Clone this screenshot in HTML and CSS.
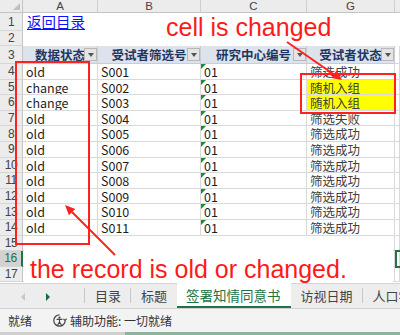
FILE: index.html
```html
<!DOCTYPE html>
<html>
<head>
<meta charset="utf-8">
<link rel="stylesheet" href="styles.css">
</head>
<body>
<div class="sheet">
  <div class="grid">
    <div class="corner"><span class="corner-tri"></span></div>
    <div class="colh">A</div>
    <div class="colh">B</div>
    <div class="colh">C</div>
    <div class="colh">G</div>
    <div class="colh colh-last"></div>

    <div class="rowh">1</div>
    <div class="blank"><a class="link">返回目录</a></div>
    <div class="blank"></div><div class="blank"></div><div class="blank"></div><div class="blank"></div>

    <div class="rowh">2</div>
    <div class="blank"></div><div class="blank"></div><div class="blank"></div><div class="blank"></div><div class="blank"></div>

    <div class="rowh">3</div>
    <div class="hcell"><span class="htext">数据状态</span><span class="dd"></span></div>
    <div class="hcell"><span class="htext">受试者筛选号</span><span class="dd"></span></div>
    <div class="hcell"><span class="htext">研究中心编号</span><span class="dd"></span></div>
    <div class="hcell"><span class="htext">受试者状态</span><span class="dd"></span></div>
    <div class="cell"></div>

    <div class="rowh">4</div><div class="cell">old</div><div class="cell">S001</div><div class="cell txt">01</div><div class="cell cn">筛选成功</div><div class="cell"></div>
    <div class="rowh">5</div><div class="cell">change</div><div class="cell">S002</div><div class="cell txt">01</div><div class="cell cn hl">随机入组</div><div class="cell"></div>
    <div class="rowh">6</div><div class="cell">change</div><div class="cell">S003</div><div class="cell txt">01</div><div class="cell cn hl">随机入组</div><div class="cell"></div>
    <div class="rowh">7</div><div class="cell">old</div><div class="cell">S004</div><div class="cell txt">01</div><div class="cell cn">筛选失败</div><div class="cell"></div>
    <div class="rowh">8</div><div class="cell">old</div><div class="cell">S005</div><div class="cell txt">01</div><div class="cell cn">筛选成功</div><div class="cell"></div>
    <div class="rowh">9</div><div class="cell">old</div><div class="cell">S006</div><div class="cell txt">01</div><div class="cell cn">筛选成功</div><div class="cell"></div>
    <div class="rowh">10</div><div class="cell">old</div><div class="cell">S007</div><div class="cell txt">01</div><div class="cell cn">筛选成功</div><div class="cell"></div>
    <div class="rowh">11</div><div class="cell">old</div><div class="cell">S008</div><div class="cell txt">01</div><div class="cell cn">筛选成功</div><div class="cell"></div>
    <div class="rowh">12</div><div class="cell">old</div><div class="cell">S009</div><div class="cell txt">01</div><div class="cell cn">筛选成功</div><div class="cell"></div>
    <div class="rowh">13</div><div class="cell">old</div><div class="cell">S010</div><div class="cell txt">01</div><div class="cell cn">筛选成功</div><div class="cell"></div>
    <div class="rowh">14</div><div class="cell">old</div><div class="cell">S011</div><div class="cell txt">01</div><div class="cell cn">筛选成功</div><div class="cell"></div>
    <div class="rowh">15</div><div class="cell"></div><div class="cell"></div><div class="cell"></div><div class="cell"></div><div class="cell"></div>
    <div class="rowh rowh-sel">16</div><div class="cell"></div><div class="cell"></div><div class="cell"></div><div class="cell"></div><div class="cell"></div>
    <div class="rowh">17</div><div class="cell"></div><div class="cell"></div><div class="cell"></div><div class="cell"></div><div class="cell"></div>
  </div>

  <div class="selbox"></div>
  <div class="note note-top">cell is changed</div>
  <div class="note-box"><span class="note note-bottom">the record is old or changed.</span></div>

  <svg class="marks" width="400" height="283" viewBox="0 0 400 283">
    <rect x="16" y="62" width="73" height="182" fill="none" stroke="#ff2020" stroke-width="2"/>
    <rect x="301" y="74" width="94" height="39" fill="none" stroke="#ff2020" stroke-width="2"/>
    <line x1="287" y1="42" x2="334" y2="74.5" stroke="#ff2020" stroke-width="2"/>
    <polygon points="342,80 331.2,78 336.4,70.6" fill="#ff2020"/>
    <line x1="115" y1="255" x2="72" y2="212" stroke="#ff2020" stroke-width="2"/>
    <polygon points="65,205 75.3,208.9 68.9,215.3" fill="#ff2020"/>
  </svg>
</div>

<div class="tabs">
  <div class="nav">
    <span class="arr arr-l"></span>
    <span class="arr arr-r"></span>
  </div>
  <div class="tab sep">目录</div>
  <div class="tab">标题</div>
  <div class="tab active">签署知情同意书</div>
  <div class="tab sep">访视日期</div>
  <div class="tab">人口学</div>
</div>

<div class="status">
  <span class="st-ready">就绪</span>
  <span class="st-acc">
    <svg width="15" height="15" viewBox="0 0 15 15">
      <path d="M7.5 1.8 A5.7 5.7 0 1 0 13.2 7.5" fill="none" stroke="#444" stroke-width="1.2"/>
      <path d="M13.2 7.5 l-1.8 -1.6 M13.2 7.5 l1.4 -1.9" stroke="#444" stroke-width="1.1" fill="none"/>
      <circle cx="7.5" cy="4.6" r="1.1" fill="#444"/>
      <path d="M4.6 6.4 H10.4 M7.5 6.4 V9 L5.6 12 M7.5 9 L9.4 12" stroke="#444" stroke-width="1.1" fill="none"/>
    </svg>
    辅助功能: 一切就绪
  </span>
</div>
<div class="bottom-strip"><span class="bs-left"></span><span class="bs-right"></span></div>
</body>
</html>
```

FILE: styles.css
```css
* { box-sizing: border-box; }
html, body { margin: 0; padding: 0; }
body {
  width: 400px;
  height: 335px;
  overflow: hidden;
  background: #ffffff;
  font-family: "Noto Sans CJK SC", "Noto Sans", sans-serif;
  color: #262626;
}
.sheet {
  position: relative;
  width: 400px;
  height: 283px;
  overflow: hidden;
}
.grid {
  display: grid;
  grid-template-columns: 23px 75px 103px 106px 88px 1fr;
  grid-template-rows: 13px 18px 15px 18px repeat(14, 15.6px);
}
.corner {
  background: #ececec;
  border-right: 1px solid #c4c4c4;
  border-bottom: 1px solid #c4c4c4;
  position: relative;
}
.corner-tri {
  position: absolute;
  right: 2px;
  bottom: 2px;
  width: 0;
  height: 0;
  border-left: 7px solid transparent;
  border-bottom: 7px solid #c0c0c0;
}
.colh {
  background: #ececec;
  border-right: 1px solid #cfcfcf;
  border-bottom: 1px solid #c4c4c4;
  font-family: "Liberation Sans", sans-serif;
  font-size: 11.5px;
  line-height: 12px;
  color: #444;
  text-align: center;
}
.colh-last { border-right: none; }
.rowh {
  background: #ececec;
  border-right: 1px solid #c4c4c4;
  border-bottom: 1px solid #d6d6d6;
  font-family: "Liberation Sans", sans-serif;
  font-size: 12px;
  color: #444;
  display: flex;
  align-items: center;
  justify-content: center;
  letter-spacing: -0.5px;
}
.rowh-sel {
  background: #d2d2d2;
  color: #217346;
  border-right: 2px solid #217346;
}
.blank { background: #fff; }
.link {
  display: block;
  color: #1010ff;
  text-decoration: underline;
  font-size: 14.5px;
  line-height: 18px;
  padding-left: 4px;
  white-space: nowrap;
}
.hcell {
  position: relative;
  background: #dde3ec;
  border-right: 1px solid #c9ced6;
  border-bottom: 1px solid #c9ced6;
  overflow: hidden;
}
.htext {
  display: block;
  text-align: center;
  font-size: 12.5px;
  font-weight: bold;
  color: #1f3760;
  line-height: 18px;
  white-space: nowrap;
}
.dd {
  position: absolute;
  right: 0;
  top: 2px;
  width: 13px;
  height: 13px;
  background: #e4e4e4;
  border: 1px solid #b8b8b8;
}
.dd::after {
  content: "";
  position: absolute;
  left: 3px;
  top: 4px;
  border-left: 3px solid transparent;
  border-right: 3px solid transparent;
  border-top: 4px solid #555;
}
.cell {
  position: relative;
  border-right: 1px solid #d9d9d9;
  border-bottom: 1px solid #d9d9d9;
  font-size: 12.5px;
  line-height: 15px;
  padding-left: 3px;
  white-space: nowrap;
  overflow: hidden;
  color: #1e1e1e;
}
.cn { color: #404040; }
.hl { background: #ffff00; }
.txt::before {
  content: "";
  position: absolute;
  left: 0;
  top: 0;
  border-top: 5px solid #1e8a3a;
  border-right: 5px solid transparent;
}
.selbox {
  position: absolute;
  left: 395px;
  top: 250px;
  width: 20px;
  height: 18px;
  border: 2px solid #217346;
}
.note {
  color: #ff1a1a;
  font-family: "Liberation Sans", sans-serif;
  font-size: 25px;
  line-height: 25px;
  white-space: nowrap;
}
.note-top {
  position: absolute;
  left: 166px;
  top: 15px;
}
.note-box {
  position: absolute;
  left: 24px;
  top: 236px;
  width: 369px;
  height: 47px;
  background: #fff;
  padding: 21px 0 0 6px;
}
.marks {
  position: absolute;
  left: 0;
  top: 0;
}
.tabs {
  display: flex;
  height: 26px;
  background: #ededed;
  border-top: 1px solid #d4d4d4;
  border-bottom: 1px solid #d0d0d0;
  font-size: 13px;
  color: #444;
}
.nav {
  flex-shrink: 0;
  width: 85px;
  position: relative;
  border-right: 1px solid #c8c8c8;
  margin: 4px 0 5px;
}
.arr {
  position: absolute;
  top: 5px;
  width: 0;
  height: 0;
  border-top: 4px solid transparent;
  border-bottom: 4px solid transparent;
}
.arr-l { left: 21px; border-right: 4px solid #c8c8c8; }
.arr-r { left: 46px; border-left: 4px solid #1d6b3a; }
.tab {
  flex-shrink: 0;
  display: flex;
  align-items: center;
  padding: 0 9px 0 10px;
  white-space: nowrap;
  line-height: 26px;
}
.tab.sep {
  border-right: 1px solid #c8c8c8;
  margin: 4px 0 5px;
  line-height: 17px;
}
.tab.active {
  background: #ffffff;
  color: #217346;
  font-size: 13.5px;
  padding: 0 10px 0 9px;
  border-bottom: 2px solid #217346;
  margin-top: -1px;
  margin-left: 1px;
}
.status {
  display: flex;
  align-items: center;
  height: 23px;
  background: #f3f3f3;
  font-size: 12px;
  color: #333;
  padding-left: 8px;
}
.st-ready { margin-right: 20px; }
.st-acc {
  display: flex;
  align-items: center;
  gap: 3px;
}
.bottom-strip {
  display: flex;
  height: 3px;
}
.bs-left { width: 125px; background: #cfcfcf; }
.bs-right { flex: 1; background: #8db39a; }
```
